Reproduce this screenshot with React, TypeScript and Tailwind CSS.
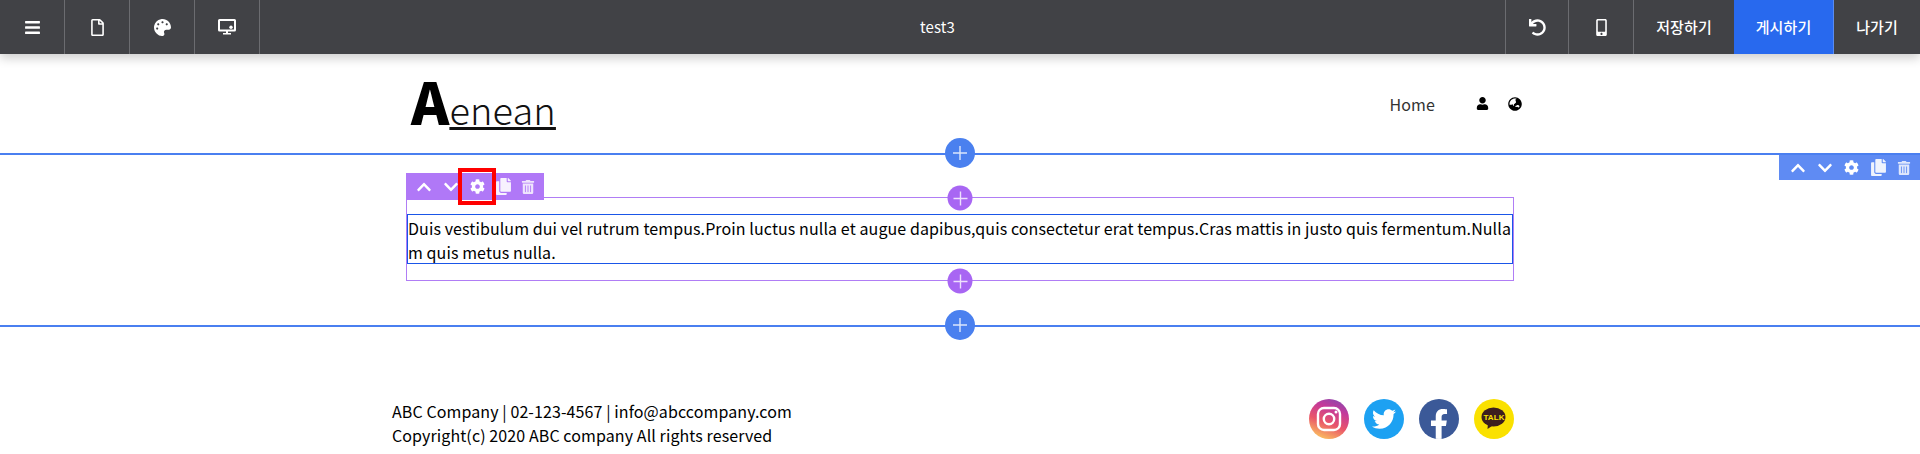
import React from 'react';
import {
  FaBars, FaRegFile, FaPalette, FaUndo, FaMobileAlt, FaChevronUp, FaChevronDown, FaCog, FaCopy, FaTrashAlt,
  FaUser, FaGlobeAsia, FaTwitter, FaFacebookF,
} from 'react-icons/fa';

const cell = 'flex h-full w-[65px] items-center justify-center border-r border-[#6b6c70] text-white';
const slot = 'flex w-[27px] justify-center';

const DesktopIcon = () => (
  <svg width="18" height="16" viewBox="0 0 18 16" fill="none">
    <rect x="1" y="1" width="16" height="10.5" stroke="white" strokeWidth="2" rx="0.5" />
    <circle cx="13" cy="8.2" r="1.7" fill="white" />
    <rect x="8" y="12" width="2" height="2" fill="white" />
    <rect x="5" y="14" width="8" height="1.5" fill="white" />
  </svg>
);

const BlockTools = ({ className, tight }: { className: string; tight?: boolean }) => (
  <div className={`absolute z-10 flex items-center text-white ${className}`}>
    <div className={slot}><FaChevronUp size={16} /></div>
    <div className={slot}><FaChevronDown size={16} /></div>
    <div className={slot}><FaCog size={15} /></div>
    <div className={tight ? 'flex w-[25px] justify-center' : slot}><FaCopy size={17} className="opacity-90" /></div>
    <div className="flex w-[23px] justify-center"><FaTrashAlt size={14} className="opacity-80" /></div>
  </div>
);

const AddButton = ({ className }: { className: string }) => (
  <div className={`absolute left-1/2 z-10 flex -translate-x-1/2 -translate-y-1/2 items-center justify-center rounded-full ${className}`}>
    <svg width="16" height="16" viewBox="0 0 16 16" stroke="white" strokeOpacity="0.8" strokeWidth="1.4">
      <path d="M8 1v14M1 8h14" />
    </svg>
  </div>
);

const Instagram = () => (
  <svg width="40" height="40" viewBox="0 0 40 40">
    <defs>
      <linearGradient id="ig" x1="0.3" y1="1" x2="0.7" y2="0">
        <stop offset="0" stopColor="#fbc25f" />
        <stop offset="0.4" stopColor="#e9556a" />
        <stop offset="0.75" stopColor="#c4399a" />
        <stop offset="1" stopColor="#8f47ad" />
      </linearGradient>
    </defs>
    <circle cx="20" cy="20" r="20" fill="url(#ig)" />
    <rect x="9" y="9" width="22" height="22" rx="6" fill="none" stroke="white" strokeWidth="2.4" />
    <circle cx="20" cy="20" r="5.2" fill="none" stroke="white" strokeWidth="2.4" />
    <circle cx="27" cy="13" r="1.5" fill="white" />
  </svg>
);

const KakaoTalk = () => (
  <div className="relative flex h-10 w-10 items-center justify-center rounded-full bg-[#fae100]">
    <svg width="26" height="26" viewBox="0 0 26 26" className="absolute left-[7px] top-[7px]">
      <ellipse cx="12.5" cy="11" rx="12" ry="9.5" fill="#3c1e1e" />
      <path d="M7 17l-.5 6 6-4z" fill="#3c1e1e" />
    </svg>
    <span className="relative -mt-[3px] font-['Liberation_Sans',sans-serif] text-[8px] font-bold leading-none text-[#fae100]">TALK</span>
  </div>
);

export default function App() {
  return (
    <div className="h-[454px] w-[1920px] overflow-hidden bg-white font-['Noto_Sans_CJK_KR','Noto_Sans',sans-serif] text-[16px] tracking-[0.1px] text-black">
      <div className="relative z-20 flex h-[54px] items-center bg-[#414246] shadow-[0_4px_10px_rgba(0,0,0,0.2)]">
        <div className={cell}><FaBars size={17} /></div>
        <div className={cell}><FaRegFile size={17} /></div>
        <div className={cell}><FaPalette size={17} /></div>
        <div className={cell}><DesktopIcon /></div>
        <div className="flex flex-1 items-center justify-center pl-[110px] text-[15px] text-white">test3</div>
        <div className="flex h-full w-[64px] items-center justify-center border-x border-[#6b6c70] text-white"><FaUndo size={17} /></div>
        <div className="flex h-full w-[65px] items-center justify-center border-r border-[#6b6c70] text-white"><FaMobileAlt size={17} /></div>
        <div className="flex h-full w-[100px] items-center justify-center text-[15px] font-medium text-white">저장하기</div>
        <div className="flex h-full w-[100px] items-center justify-center border-r border-[#5a8cf0] bg-[#2869ee] text-[15px] font-medium text-white">게시하기</div>
        <div className="flex h-full w-[86px] items-center justify-center text-[15px] font-medium text-white">나가기</div>
      </div>

      <div className="mx-auto flex h-[99px] w-[1136px] items-center justify-between pl-[19px] pr-[6px]">
        <div className="-mt-[8px] flex items-baseline leading-none text-[#111]">
          <span className="text-[58px] font-black text-black">A</span>
          <span className="text-[38px] font-light underline decoration-[3px] underline-offset-2">enean</span>
        </div>
        <div className="flex items-center text-black">
          <span className="mr-[41px] text-[16px] text-[#333]">Home</span>
          <FaUser size={13} className="mr-[19px]" />
          <FaGlobeAsia size={14} />
        </div>
      </div>

      <div className="relative h-[174px] border-y-2 border-[#4a7ff0]">
        <AddButton className="-top-[2px] h-[30px] w-[30px] bg-[#4a80ef]" />
        <AddButton className="top-full h-[30px] w-[30px] bg-[#4a80ef]" />
        <BlockTools className="right-0 top-0 h-[25px] w-[141px] bg-[#5f8bf3] pl-[5px]" />
        <div className="relative ml-[406px] mt-[42px] w-[1108px] border border-[#b07df5] py-[16px]">
          <AddButton className="top-0 h-[25px] w-[25px] bg-[#a866f3]" />
          <AddButton className="top-[calc(100%+1px)] h-[25px] w-[25px] bg-[#a866f3]" />
          <BlockTools tight className="-left-px -top-[25px] h-[27px] w-[138px] bg-[#b078f7] pl-[4px]" />
          <div className="absolute left-[51px] -top-[30px] z-10 h-[37px] w-[38px] border-4 border-[#f00]" />
          <div className="h-[50px] break-all border border-[#1a56e8] pt-px text-[16px] leading-[24px]">
            Duis vestibulum dui vel rutrum tempus.Proin luctus nulla et augue dapibus,quis consectetur erat tempus.Cras mattis in justo quis fermentum.Nullam quis metus nulla.
          </div>
        </div>
      </div>

      <div className="ml-[392px] flex w-[1122px] items-start justify-between pt-[72px]">
        <div className="leading-[24px]">
          <div>ABC Company | 02-123-4567 | info@abccompany.com</div>
          <div>Copyright(c) 2020 ABC company All rights reserved</div>
        </div>
        <div className="flex gap-[15px]">
          <Instagram />
          <div className="flex h-10 w-10 items-center justify-center rounded-full bg-[#1da1f2] text-white"><FaTwitter size={24} /></div>
          <div className="flex h-10 w-10 items-end justify-center overflow-hidden rounded-full bg-[#3b5998] text-white"><FaFacebookF size={30} /></div>
          <KakaoTalk />
        </div>
      </div>
    </div>
  );
}
